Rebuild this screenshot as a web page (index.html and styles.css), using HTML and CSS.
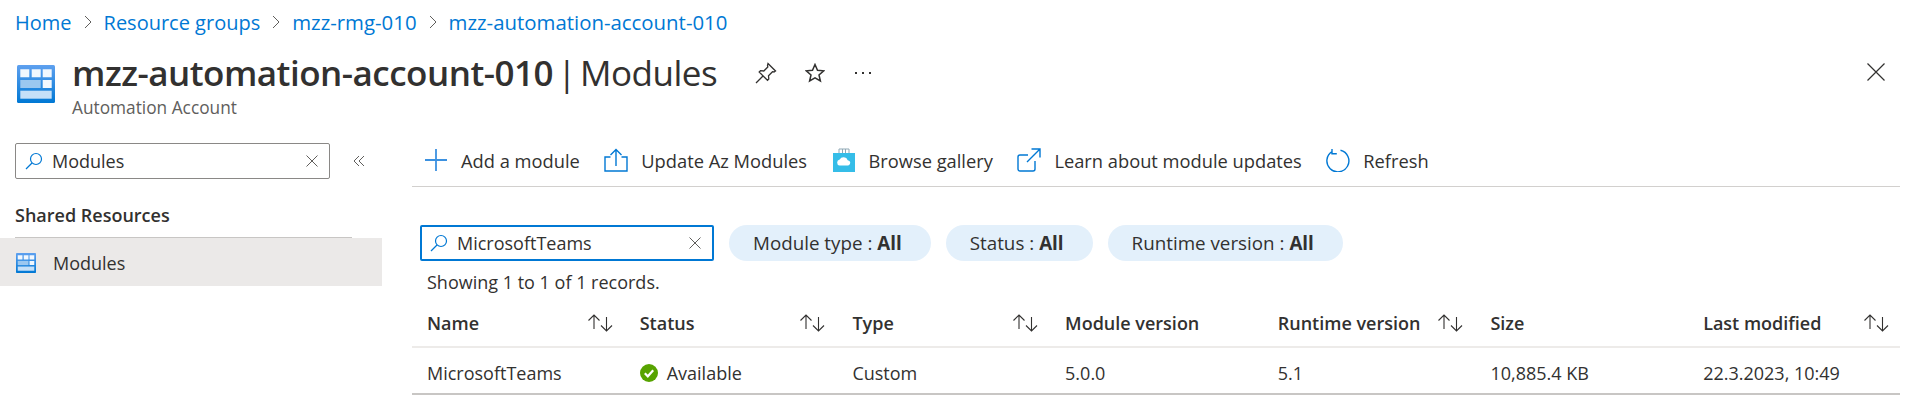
FILE: index.html
```html
<!DOCTYPE html>
<html lang="en">
<head>
  <meta charset="UTF-8" />
  <title>mzz-automation-account-010 | Modules</title>
  <link rel="stylesheet" href="styles.css">
</head>
<body>

  <!-- shared icons -->
  <svg class="defs" width="0" height="0">
    <defs>
      <linearGradient id="mod-bg" x1="0" y1="0" x2="0" y2="1">
        <stop offset="0" stop-color="#5ea0ef"/>
        <stop offset="1" stop-color="#0078d4"/>
      </linearGradient>
    </defs>
    <symbol id="mod-icon" viewBox="0 0 38 38">
      <rect width="38" height="38" rx="1.5" fill="url(#mod-bg)"/>
      <path fill="#f2f8fe" d="M3.300 4.300h9v8h-9zM14.700 4.300h9v8h-9zM25.700 4.300h9v8h-9zM25.700 15h9v8h-9z"/>
      <path fill="#9cc8f0" d="M3.300 15h20.400v8H3.300z"/>
      <path fill="#c5e0f8" d="M3.300 25.700h31.400v8H3.300z"/>
    </symbol>
    <symbol id="sort-icon" viewBox="0 0 25 18">
      <path d="M6 15V1M.5 6.500L6 1l5.500 5.500M18.500 3v14M13 11.500l5.500 5.500 5.500-5.500"/>
    </symbol>
    <symbol id="mag-icon" viewBox="0 0 18 18">
      <circle cx="11" cy="7" r="5.500"/><path d="M7 11l-6 6"/>
    </symbol>
    <symbol id="clear-icon" viewBox="0 0 12 12">
      <path d="M.5.5l11 11M11.500.5l-11 11"/>
    </symbol>
    <symbol id="chev-icon" viewBox="0 0 8 14">
      <path d="M1 1l6 6-6 6"/>
    </symbol>
  </svg>

  <nav class="crumbs">
    <a href="#">Home</a>
    <svg class="chev"><use href="#chev-icon"/></svg>
    <a href="#">Resource groups</a>
    <svg class="chev"><use href="#chev-icon"/></svg>
    <a class="crumb-id" href="#">mzz-rmg-010</a>
    <svg class="chev"><use href="#chev-icon"/></svg>
    <a class="crumb-id" href="#">mzz-automation-account-010</a>
  </nav>

  <header class="title-bar">
    <svg class="title-icon"><use href="#mod-icon"/></svg>
    <div class="title-text">
      <h1><b>mzz-automation-account-010</b> | Modules</h1>
      <p>Automation Account</p>
    </div>
    <div class="title-actions">
      <svg class="ico-pin" viewBox="0 0 22 22"><path d="M13 1.500l7.500 7.500-1.500 1-1.500-.3-4 4 .3 3.300-1.300 1.300-8.300-8.300 1.300-1.300 3.300.3 4-4-.3-1.500zM8.500 13.500L1 21"/></svg>
      <svg class="ico-star" viewBox="0 0 20 20"><path d="M10 1.500l2.500 5.800 6.200.5-4.700 4.100 1.400 6.100-5.400-3.200-5.400 3.200 1.400-6.100-4.700-4.100 6.200-.5z"/></svg>
      <span class="dots"><i></i><i></i><i></i></span>
    </div>
    <svg class="close" viewBox="0 0 18 18"><path d="M.5.5l17 17M17.500.5l-17 17"/></svg>
  </header>

  <div class="layout">
    <aside class="sidebar">
      <div class="side-top">
        <div class="search side-search">
          <svg class="mag"><use href="#mag-icon"/></svg>
          <span class="search-val">Modules</span>
          <svg class="clear"><use href="#clear-icon"/></svg>
        </div>
        <svg class="collapse" viewBox="0 0 12 12"><path d="M6 1L1 6l5 5M11 1L6 6l5 5"/></svg>
      </div>
      <h3 class="side-head">Shared Resources</h3>
      <div class="side-item">
        <svg class="side-icon"><use href="#mod-icon"/></svg>
        <span>Modules</span>
      </div>
    </aside>

    <main class="content">
      <div class="toolbar">
        <div class="tool">
          <svg class="tool-ico" viewBox="0 0 24 24"><path d="M12 1v22M1 12h22" stroke="#3c91e0" stroke-width="1.800"/></svg>
          <span>Add a module</span>
        </div>
        <div class="tool">
          <svg class="tool-ico" viewBox="0 0 24 24"><path d="M6.500 9H1v14h22V9h-5.500M12 18V1.500M6.500 7L12 1.500 17.500 7"/></svg>
          <span>Update Az Modules</span>
        </div>
        <div class="tool">
          <svg class="tool-ico" viewBox="0 0 24 24">
            <path d="M7 5V1h10v4M10.500 5V1M13.500 5V1" stroke="#8fa8b5" stroke-width="1"/>
            <path d="M1 5h22v19H1z" fill="#35bde8" stroke="none"/>
            <path d="M7.500 17.500a3 3 0 0 1 .2-5.900 4.300 4.300 0 0 1 8 .6 2.700 2.700 0 0 1 .6 5.300z" fill="#fff" stroke="none"/>
          </svg>
          <span>Browse gallery</span>
        </div>
        <div class="tool">
          <svg class="tool-ico" viewBox="0 0 24 24"><path d="M18 13v8a2 2 0 0 1-2 2H3a2 2 0 0 1-2-2V9a2 2 0 0 1 2-2h8M10 14L23 1M14.500 1H23v8.500"/></svg>
          <span>Learn about module updates</span>
        </div>
        <div class="tool">
          <svg class="tool-ico" viewBox="0 0 24 24"><path d="M14.500 1.800a11 11 0 1 1-8.200 1.200M6 .5v4.800h4.800" transform="translate(0 .4)"/></svg>
          <span>Refresh</span>
        </div>
      </div>

      <div class="filters">
        <div class="search grid-search">
          <svg class="mag"><use href="#mag-icon"/></svg>
          <span class="search-val">MicrosoftTeams</span>
          <svg class="clear"><use href="#clear-icon"/></svg>
        </div>
        <span class="pill">Module type : <b>All</b></span>
        <span class="pill">Status : <b>All</b></span>
        <span class="pill">Runtime version : <b>All</b></span>
      </div>

      <p class="count">Showing 1 to 1 of 1 records.</p>

      <div class="grid grid-head">
        <div class="cell"><span>Name</span><svg class="sort"><use href="#sort-icon"/></svg></div>
        <div class="cell"><span>Status</span><svg class="sort"><use href="#sort-icon"/></svg></div>
        <div class="cell"><span>Type</span><svg class="sort"><use href="#sort-icon"/></svg></div>
        <div class="cell"><span>Module version</span></div>
        <div class="cell"><span>Runtime version</span><svg class="sort"><use href="#sort-icon"/></svg></div>
        <div class="cell"><span>Size</span></div>
        <div class="cell"><span>Last modified</span><svg class="sort"><use href="#sort-icon"/></svg></div>
      </div>
      <div class="grid grid-row">
        <div class="cell"><span>MicrosoftTeams</span></div>
        <div class="cell status">
          <svg class="ok" viewBox="0 0 18 18"><circle cx="9" cy="9" r="9" fill="#57a300"/><path d="M4.800 9.300l3 3 5.400-6" fill="none" stroke="#fff" stroke-width="2.200"/></svg>
          <span>Available</span>
        </div>
        <div class="cell"><span>Custom</span></div>
        <div class="cell"><span>5.0.0</span></div>
        <div class="cell"><span>5.1</span></div>
        <div class="cell"><span>10,885.4 KB</span></div>
        <div class="cell"><span>22.3.2023, 10:49</span></div>
      </div>
    </main>
  </div>

</body>
</html>
```

FILE: styles.css
```css
* {
  margin: 0;
  padding: 0;
  box-sizing: border-box;
}

body {
  font-family: 'Open Sans', 'Noto Sans', sans-serif;
  font-size: 18px;
  color: #323130;
  background: #fff;
  overflow: hidden;
}

svg {
  display: block;
  flex: none;
  fill: none;
}

.defs {
  position: absolute;
}

.crumbs {
  display: flex;
  align-items: center;
  height: 44px;
  padding-left: 15px;
  font-size: 20px;
}

.crumbs a {
  color: #0078d4;
  text-decoration: none;
}

.crumbs .crumb-id {
  font-size: 20.400px;
}

.chev {
  width: 8px;
  height: 14px;
  margin: 0 12px;
  stroke: #605e5c;
  stroke-width: 1;
}

.title-bar {
  display: flex;
  height: 86px;
  padding-left: 17px;
  padding-right: 37px;
}

.title-icon {
  width: 38px;
  height: 38px;
  margin-top: 21px;
}

.title-text {
  margin-left: 17px;
  width: 683px;
}

.title-text h1 {
  font-size: 35px;
  font-weight: 400;
  line-height: 46px;
  margin-top: 6px;
  letter-spacing: -0.5px;
  word-spacing: -4.500px;
  white-space: nowrap;
}

.title-text h1 b {
  font-weight: 600;
}

.title-text p {
  font-size: 17.300px;
  line-height: 24px;
  color: #605e5c;
}

.title-actions {
  display: flex;
  align-items: center;
  height: 22px;
  margin-top: 18px;
}

.ico-pin {
  width: 22px;
  height: 22px;
  stroke: #323130;
  stroke-width: 1.300;
}

.ico-star {
  width: 20px;
  height: 20px;
  margin-left: 28px;
  stroke: #323130;
  stroke-width: 1.500;
}

.dots {
  display: flex;
  gap: 5px;
  margin-left: 30px;
}

.dots i {
  width: 2px;
  height: 2px;
  background: #323130;
}

.close {
  width: 18px;
  height: 18px;
  margin-left: auto;
  margin-top: 19px;
  stroke: #323130;
  stroke-width: 1.200;
}

.layout {
  display: flex;
}

.sidebar {
  width: 382px;
  flex: none;
  padding-top: 13px;
}

.side-top {
  display: flex;
  align-items: center;
  padding-left: 15px;
}

.search {
  display: flex;
  align-items: center;
  background: #fff;
}

.side-search {
  width: 315px;
  height: 36px;
  padding: 0 11px 0 9px;
  border: 1px solid #8a8886;
  border-radius: 2px;
}

.mag {
  width: 18px;
  height: 18px;
  stroke: #0078d4;
  stroke-width: 1.200;
}

.search-val {
  flex: 1;
  margin-left: 9px;
}

.clear {
  width: 12px;
  height: 12px;
  stroke: #605e5c;
  stroke-width: 1;
}

.collapse {
  width: 12px;
  height: 12px;
  margin-left: 23px;
  stroke: #605e5c;
  stroke-width: 1;
}

.side-head {
  margin: 23px 0 0 15px;
  width: 337px;
  height: 36px;
  font-size: 18px;
  font-weight: 600;
  line-height: 26px;
  border-bottom: 1px solid #c8c6c4;
}

.side-item {
  display: flex;
  align-items: center;
  height: 48px;
  padding: 2px 0 0 16px;
  background: #ebe9e8;
}

.side-icon {
  width: 20px;
  height: 20px;
}

.side-item span {
  margin-left: 17px;
}

.content {
  flex: 1;
  min-width: 0;
  margin: 0 22px 0 30px;
}

.toolbar {
  display: flex;
  align-items: center;
  height: 57px;
  padding: 4px 0 0 12px;
  gap: 24.500px;
  font-size: 18.300px;
  border-bottom: 1px solid #d2d0ce;
}

.tool {
  display: flex;
  align-items: center;
  gap: 13px;
}

.tool-ico {
  width: 24px;
  height: 24px;
  stroke: #0078d4;
  stroke-width: 1.400;
}

.filters {
  display: flex;
  align-items: center;
  gap: 15px;
  margin: 38px 0 0 8px;
}

.grid-search {
  width: 294px;
  height: 36px;
  padding: 0 11px 0 8px;
  border: 2px solid #0078d4;
  border-radius: 2px;
}

.pill {
  display: flex;
  align-items: center;
  gap: 5px;
  height: 36px;
  padding: 0 29px 0 24px;
  font-size: 18.800px;
  background: #e3f0fb;
  border-radius: 18px;
}

.pill b {
  font-weight: 700;
}

.count {
  margin: 10px 0 0 15px;
  line-height: 22px;
}

.grid {
  display: grid;
  grid-template-columns: repeat(7, 212.700px);
  padding-left: 15px;
  border-bottom: 2px solid #edebe9;
}

.grid-head {
  height: 55px;
  padding-top: 6px;
  font-weight: 600;
  align-items: center;
}

.grid-row {
  height: 47px;
  padding-top: 5px;
  align-items: center;
  border-bottom-color: #c8c6c4;
}

.cell {
  display: flex;
  align-items: center;
  justify-content: space-between;
  padding-right: 27px;
}

.sort {
  width: 25px;
  height: 18px;
  stroke: #323130;
  stroke-width: 1.100;
}

.status {
  justify-content: flex-start;
  gap: 9px;
}

.ok {
  width: 18px;
  height: 18px;
}
```
